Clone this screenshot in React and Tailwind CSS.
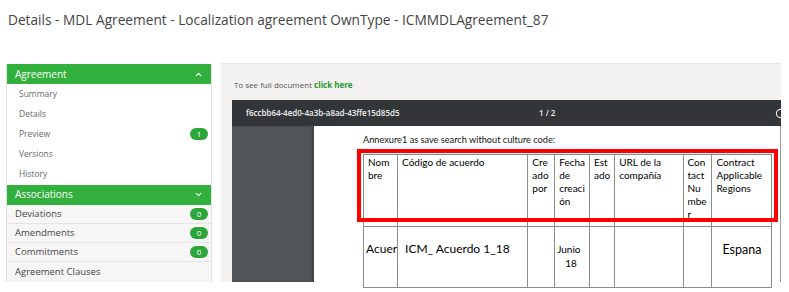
import React from 'react'
import { ChevronUp, ChevronDown, RotateCw } from 'lucide-react'

const agreementItems = [
  { label: 'Summary' },
  { label: 'Details' },
  { label: 'Preview', badge: '1' },
  { label: 'Versions' },
  { label: 'History' },
]

const associationItems = [
  { label: 'Deviations', badge: '0' },
  { label: 'Amendments', badge: '0' },
  { label: 'Commitments', badge: '0' },
  { label: 'Agreement Clauses' },
]

const headers = [
  { w: 'w-[34px]', lines: ['Nom', 'bre'] },
  { w: 'w-[132px]', lines: ['Código de acuerdo'] },
  { w: 'w-[27px]', lines: ['Cre', 'ado', 'por'] },
  { w: 'w-[32px]', lines: ['Fecha', 'de', 'creaci', 'ón'] },
  { w: 'w-[24px]', lines: ['Est', 'ado'] },
  { w: 'w-[70px]', lines: ['URL de la', 'compañía'] },
  { w: 'w-[29px]', lines: ['Con', 'tact', 'Nu', 'mbe', 'r'] },
  { w: 'w-[60px]', lines: ['Contract', 'Applicable', 'Regions'] },
]

function Badge({ value }) {
  return (
    <span className="flex h-[12px] w-[18px] items-center justify-center rounded-full bg-[#2ca53a] text-[8px] leading-none text-white">
      {value}
    </span>
  )
}

function SectionHeader({ title, open }) {
  return (
    <div className="flex h-[20px] items-center justify-between bg-[#31b03d] pl-[8px] pr-[8px] text-[10px] text-white">
      <span>{title}</span>
      {open ? <ChevronUp size={9} strokeWidth={3} /> : <ChevronDown size={9} strokeWidth={3} />}
    </div>
  )
}

function Sidebar() {
  return (
    <div className="mt-px w-[206px] border-x border-[#e2e2e2]">
      <SectionHeader title="Agreement" open />
      {agreementItems.map((item) => (
        <div key={item.label} className="flex h-[20.2px] items-center justify-between bg-white pl-[12px] pr-[3px] text-[8.5px] text-[#6b6b6b]">
          <span>{item.label}</span>
          {item.badge && <Badge value={item.badge} />}
        </div>
      ))}
      <SectionHeader title="Associations" />
      {associationItems.map((item) => (
        <div key={item.label} className="flex h-[19px] items-center justify-between border-b border-[#e4e4e4] bg-[#f6f6f6] pl-[8px] pr-[3px] text-[9.5px] text-[#454545] last:border-b-0 last:h-[20px]">
          <span>{item.label}</span>
          {item.badge && <Badge value={item.badge} />}
        </div>
      ))}
    </div>
  )
}

function DocTable() {
  return (
    <div className="relative w-[409px]">
      <table className="table-fixed border-collapse font-['Lato',sans-serif] text-black">
        <thead>
          <tr className="h-[72px]">
            {headers.map((h, i) => (
              <th key={i} className={`${h.w} border border-[#8c8c8c] px-[4px] pt-[1px] align-top text-left text-[10px] font-normal leading-[13px]`}>
                {h.lines.map((l, j) => (
                  <div key={j} className="whitespace-nowrap">{l}</div>
                ))}
              </th>
            ))}
          </tr>
        </thead>
        <tbody>
          <tr className="h-[61px]">
            <td className="border border-[#8c8c8c] pl-[2px] pt-[14px] align-top text-[12px] leading-[16px] whitespace-nowrap overflow-hidden">Acuer</td>
            <td className="border border-[#8c8c8c] pl-[7px] pt-[14px] align-top text-[12px] leading-[16px] whitespace-nowrap">ICM_ Acuerdo 1_18</td>
            <td className="border border-[#8c8c8c]"></td>
            <td className="border border-[#8c8c8c] pl-[2px] pt-[15px] align-top text-[10px] leading-[14px]">
              <div>Junio</div>
              <div className="pl-[8px]">18</div>
            </td>
            <td className="border border-[#8c8c8c]"></td>
            <td className="border border-[#8c8c8c]"></td>
            <td className="border border-[#8c8c8c]"></td>
            <td className="border border-[#8c8c8c] pl-[10px] pt-[15px] align-top text-[12.5px] leading-[16px]">Espana</td>
          </tr>
        </tbody>
      </table>
      <div className="pointer-events-none absolute left-[-6px] top-[-5px] h-[73px] w-[421px] border-[4px] border-[#ff0000]" />
    </div>
  )
}

function Viewer() {
  return (
    <div className="ml-[11px] w-[549px]">
      <div className="flex h-[26px] items-center overflow-hidden bg-[#323639] pl-[14px] text-[8px] font-semibold text-[#f1f1f1]">
        <span className="w-[293px] whitespace-nowrap">f6ccbb64-4ed0-4a3b-a8ad-43ffe15d85d5</span>
        <span>1 / 2</span>
        <span className="flex-1" />
        <RotateCw size={11} strokeWidth={2.5} className="mr-[-5px] shrink-0" />
      </div>
      <div className="flex h-[156px]">
        <div className="w-[82px] bg-[#525659] shadow-[inset_-2px_0_2px_rgba(0,0,0,0.25)]" />
        <div className="flex-1 border-r border-[#9a9a9a] bg-white pl-[49px] pt-[8px]">
          <div className="mb-[8px] font-['Lato',sans-serif] text-[9.2px] leading-[12px] text-[#111]">
            Annexure1 as save search without culture code:
          </div>
          <DocTable />
        </div>
      </div>
    </div>
  )
}

export default function App() {
  return (
    <div className="min-h-[292px] bg-white font-['Open_Sans',sans-serif]">
      <h1 className="pl-[8px] pt-[10px] text-[13.7px] font-normal leading-[20px] text-[#444]">
        Details - MDL Agreement - Localization agreement OwnType - ICMMDLAgreement_87
      </h1>
      <div className="mt-[33px] flex items-start pl-[6px]">
        <Sidebar />
        <div className="ml-[9px] h-[219px] w-[560px] border-t border-[#e6e6e6] bg-[#f3f2f1]">
          <div className="pl-[13px] pt-[15px] text-[8px] leading-[12px] text-[#555]">
            To see full document <span className="font-bold text-[#23962f]">click here</span>
          </div>
          <div className="mt-[9px]">
            <Viewer />
          </div>
        </div>
      </div>
    </div>
  )
}
